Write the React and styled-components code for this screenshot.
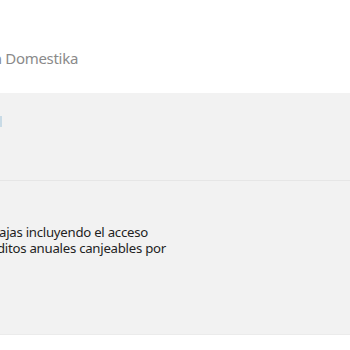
import React from "react";
import styled, { createGlobalStyle } from "styled-components";

const Global = createGlobalStyle`
  html, body { margin: 0; padding: 0; background: #ffffff; overflow: hidden; }
  body { font-family: "Noto Sans", "Open Sans", sans-serif; }
`;

const Page = styled.div`
  width: 350px;
  height: 350px;
  display: flex;
  flex-direction: column;
  overflow: hidden;
`;

const Header = styled.header`
  height: 93px;
  display: flex;
  align-items: flex-start;
  padding-top: 47px;
  box-sizing: border-box;
`;

const EndAligned = styled.div`
  width: ${(p) => p.$end}px;
  display: flex;
  justify-content: flex-end;
  white-space: nowrap;
`;

const Title = styled.span`
  font-size: 15px;
  letter-spacing: -0.3px;
  line-height: 22px;
  color: #8a8a8a;
`;

const Panel = styled.section`
  background: #f2f2f2;
  height: 241px;
  display: flex;
  flex-direction: column;
  border-bottom: 1px solid #ebebeb;
`;

const TopBlock = styled.div`
  height: 87px;
  border-bottom: 1px solid #e6e6e6;
  position: relative;
`;

const Marker = styled.span`
  position: absolute;
  left: 0;
  top: 23px;
  width: 2px;
  height: 11px;
  background: #c9dbe6;
`;

const Body = styled.div`
  padding-top: 43px;
  display: flex;
  flex-direction: column;
`;

const Text = styled.span`
  font-size: 13.2px;
  letter-spacing: -0.25px;
  line-height: 16px;
  color: #222222;
`;

export default function App() {
  return (
    <>
      <Global />
      <Page>
        <Header>
          <EndAligned $end={78}>
            <Title>Aprende con Domestika</Title>
          </EndAligned>
        </Header>
        <Panel>
          <TopBlock>
            <Marker />
          </TopBlock>
          <Body>
            <EndAligned $end={148}>
              <Text>todas las ventajas incluyendo el acceso</Text>
            </EndAligned>
            <EndAligned $end={166}>
              <Text>y créditos anuales canjeables por</Text>
            </EndAligned>
          </Body>
        </Panel>
      </Page>
    </>
  );
}
